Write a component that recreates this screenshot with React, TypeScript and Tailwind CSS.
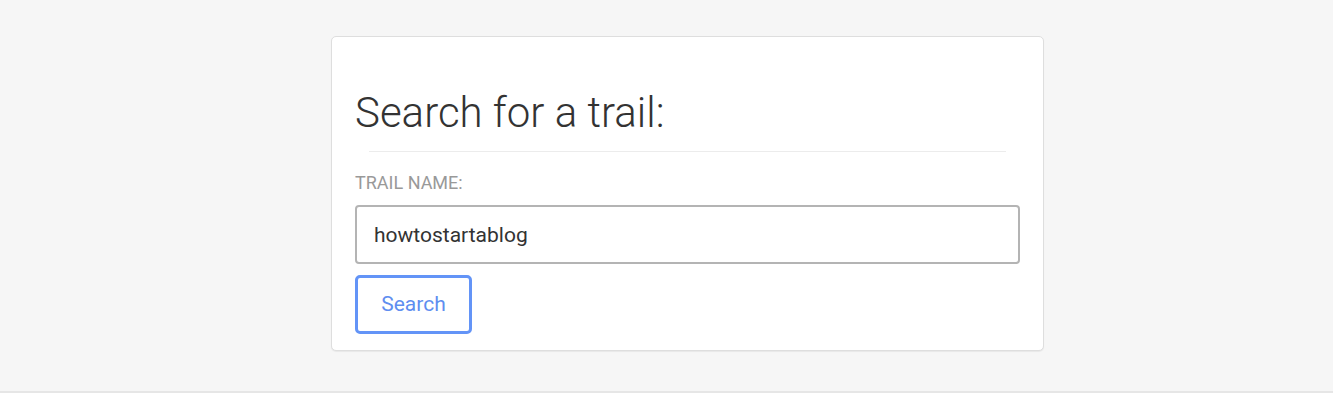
import { useState } from "react";

const App = () => {
  const [trail, setTrail] = useState("howtostartablog");

  return (
    <div className="min-h-[414px] bg-white" style={{ fontFamily: "Roboto, 'Noto Sans', sans-serif" }}>
      <div className="h-[393px] bg-[#f6f6f6] border-b-2 border-[#e6e6e6] pt-9 pl-[331px]">
        <div className="w-[713px] bg-white border border-[#dedede] rounded-[5px] shadow-[0_1px_1px_rgba(0,0,0,0.06)] px-[23px] pt-[53px] pb-4">
          <h1 className="text-[42px] leading-[46px] font-light text-[#333]">Search for a trail:</h1>
          <hr className="mt-[15px] mx-[14px] border-0 border-t border-[#ececec]" />
          <label className="block mt-[19px] text-[18px] leading-6 uppercase text-[#999]">Trail name:</label>
          <input
            value={trail}
            onChange={(e) => setTrail(e.target.value)}
            autoFocus
            className="mt-[10px] block w-full h-[59px] border-2 border-[#b4b4b4] rounded-[4px] px-[17px] text-[21px] text-[#333] outline-none"
          />
          <button className="mt-[11px] w-[117px] h-[59px] border-[3px] border-[#6394f7] rounded-[5px] text-[21px] text-[#5f8ef0] bg-white">
            Search
          </button>
        </div>
      </div>
    </div>
  );
};

export default App;
